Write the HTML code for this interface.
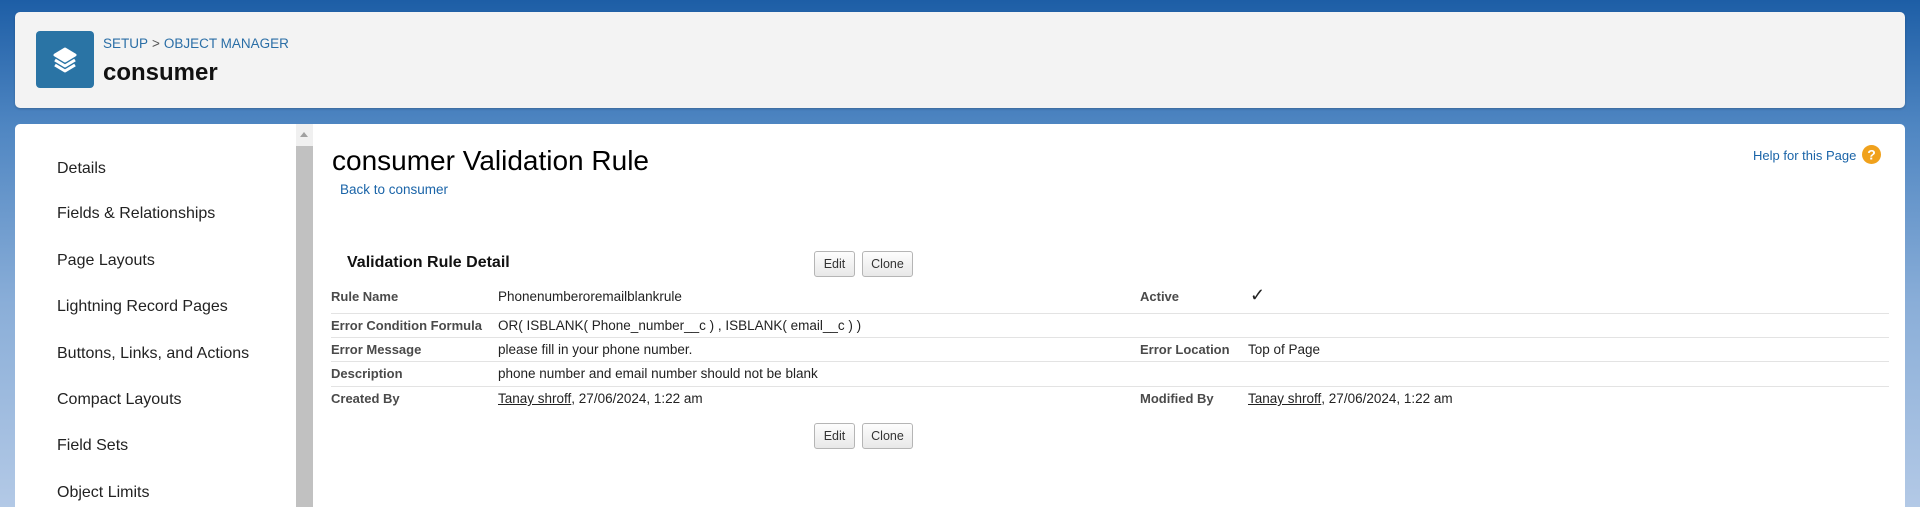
<!DOCTYPE html>
<html style="width:1920px;height:507px;overflow:hidden"><head><meta charset="utf-8"><style>
*{margin:0;padding:0;box-sizing:border-box}
body{width:1920px;height:507px;overflow:hidden;font-family:"Liberation Sans",Arial,sans-serif;background:linear-gradient(180deg,#1d5ea6 0%,#4f86c2 25%,#8aaed8 60%,#b3c9e6 100%);position:relative}
.hdr{position:absolute;left:15px;top:12px;width:1890px;height:96px;background:#f3f3f3;border-radius:5px;box-shadow:0 1px 2px rgba(0,0,0,.2)}
.ico{position:absolute;left:21px;top:19px;width:58px;height:57px;background:#2a74a5;border-radius:4px}
.bc{position:absolute;left:88px;top:24px;font-size:13.5px;color:#2a6ea6}
.bc span{color:#555;margin:0 4px}
.ttl{position:absolute;left:88px;top:47px;font-size:24px;font-weight:bold;color:#111}
.card{position:absolute;left:15px;top:124px;width:1890px;height:383px;background:#fff;border-radius:5px 5px 0 0}
.side a{position:absolute;left:42px;font-size:16px;color:#222;text-decoration:none}
.sb{position:absolute;left:281px;top:0;width:17px;height:383px;background:#f0f0f0}
.sb .t{position:absolute;left:0;top:22px;width:17px;height:361px;background:#c1c1c1}
.sb .a{position:absolute;left:4px;top:8px;border-left:4px solid transparent;border-right:4px solid transparent;border-bottom:5px solid #a0a0a0}
.c{position:absolute;font-size:13.5px;color:#222;white-space:nowrap}
.l{font-weight:bold;color:#4a4a4a;font-size:13px}
.ln{position:absolute;left:331px;width:1558px;height:1px;background:#e3e3e3}
.btn{position:absolute;height:26px;border:1px solid #b5b5b5;border-radius:3px;background:linear-gradient(#fdfdfd,#e8e8e8);font-size:12.5px;color:#333;text-align:center;line-height:24px}
u{text-decoration:underline}
</style></head><body>
<div class="hdr">
 <div class="ico"><svg width="58" height="57" viewBox="0 0 58 57"><g fill="none" stroke="#fff" stroke-width="3" stroke-linejoin="round"><path d="M19 24 L29 18 L39 24 L29 30 Z" fill="#fff"/><path d="M19 29 L29 35 L39 29"/><path d="M19 34 L29 40 L39 34"/></g></svg></div>
 <div class="bc">SETUP<span>&gt;</span>OBJECT MANAGER</div>
 <div class="ttl">consumer</div>
</div>
<div class="card">
 <div class="side">
  <a style="top:36px">Details</a><a style="top:81px">Fields &amp; Relationships</a><a style="top:128px">Page Layouts</a><a style="top:174px">Lightning Record Pages</a><a style="top:221px">Buttons, Links, and Actions</a><a style="top:267px">Compact Layouts</a><a style="top:313px">Field Sets</a><a style="top:360px">Object Limits</a>
 </div>
 <div class="sb"><div class="a"></div><div class="t"></div></div>
</div>
<div class="c" style="left:332px;top:145px;font-size:28px;color:#000">consumer Validation Rule</div>
<div class="c" style="left:340px;top:182px;font-size:13.5px;color:#1a64a8">Back to consumer</div>
<div class="c" style="left:1753px;top:148px;font-size:13px;color:#1a64a8">Help for this Page</div>
<svg style="position:absolute;left:1861px;top:144px" width="21" height="21"><circle cx="10.5" cy="10.5" r="9.5" fill="#f0a11c"/><text x="10.5" y="15.5" font-size="14" font-weight="bold" fill="#fff" text-anchor="middle" font-family="Liberation Sans">?</text></svg>
<div class="c" style="left:347px;top:254px;font-size:16px;font-weight:bold;color:#111">Validation Rule Detail</div>
<div class="btn" style="left:814px;top:251px;width:41px">Edit</div>
<div class="btn" style="left:862px;top:251px;width:51px">Clone</div>
<div class="c l" style="left:331px;top:289px">Rule Name</div>
<div class="c" style="left:498px;top:289px">Phonenumberoremailblankrule</div>
<div class="c l" style="left:1140px;top:289px">Active</div>
<div class="c" style="left:1250px;top:285px;font-size:18px">✓</div>
<div class="ln" style="top:313px"></div>
<div class="c l" style="left:331px;top:318px">Error Condition Formula</div>
<div class="c" style="left:498px;top:318px">OR( ISBLANK( Phone_number__c ) , ISBLANK( email__c ) )</div>
<div class="ln" style="top:337px"></div>
<div class="c l" style="left:331px;top:342px">Error Message</div>
<div class="c" style="left:498px;top:342px">please fill in your phone number.</div>
<div class="c l" style="left:1140px;top:342px">Error Location</div>
<div class="c" style="left:1248px;top:342px">Top of Page</div>
<div class="ln" style="top:361px"></div>
<div class="c l" style="left:331px;top:366px">Description</div>
<div class="c" style="left:498px;top:366px">phone number and email number should not be blank</div>
<div class="ln" style="top:386px"></div>
<div class="c l" style="left:331px;top:391px">Created By</div>
<div class="c" style="left:498px;top:391px"><u>Tanay shroff</u>, 27/06/2024, 1:22 am</div>
<div class="c l" style="left:1140px;top:391px">Modified By</div>
<div class="c" style="left:1248px;top:391px"><u>Tanay shroff</u>, 27/06/2024, 1:22 am</div>
<div class="btn" style="left:814px;top:423px;width:41px">Edit</div>
<div class="btn" style="left:862px;top:423px;width:51px">Clone</div>
</body></html>
